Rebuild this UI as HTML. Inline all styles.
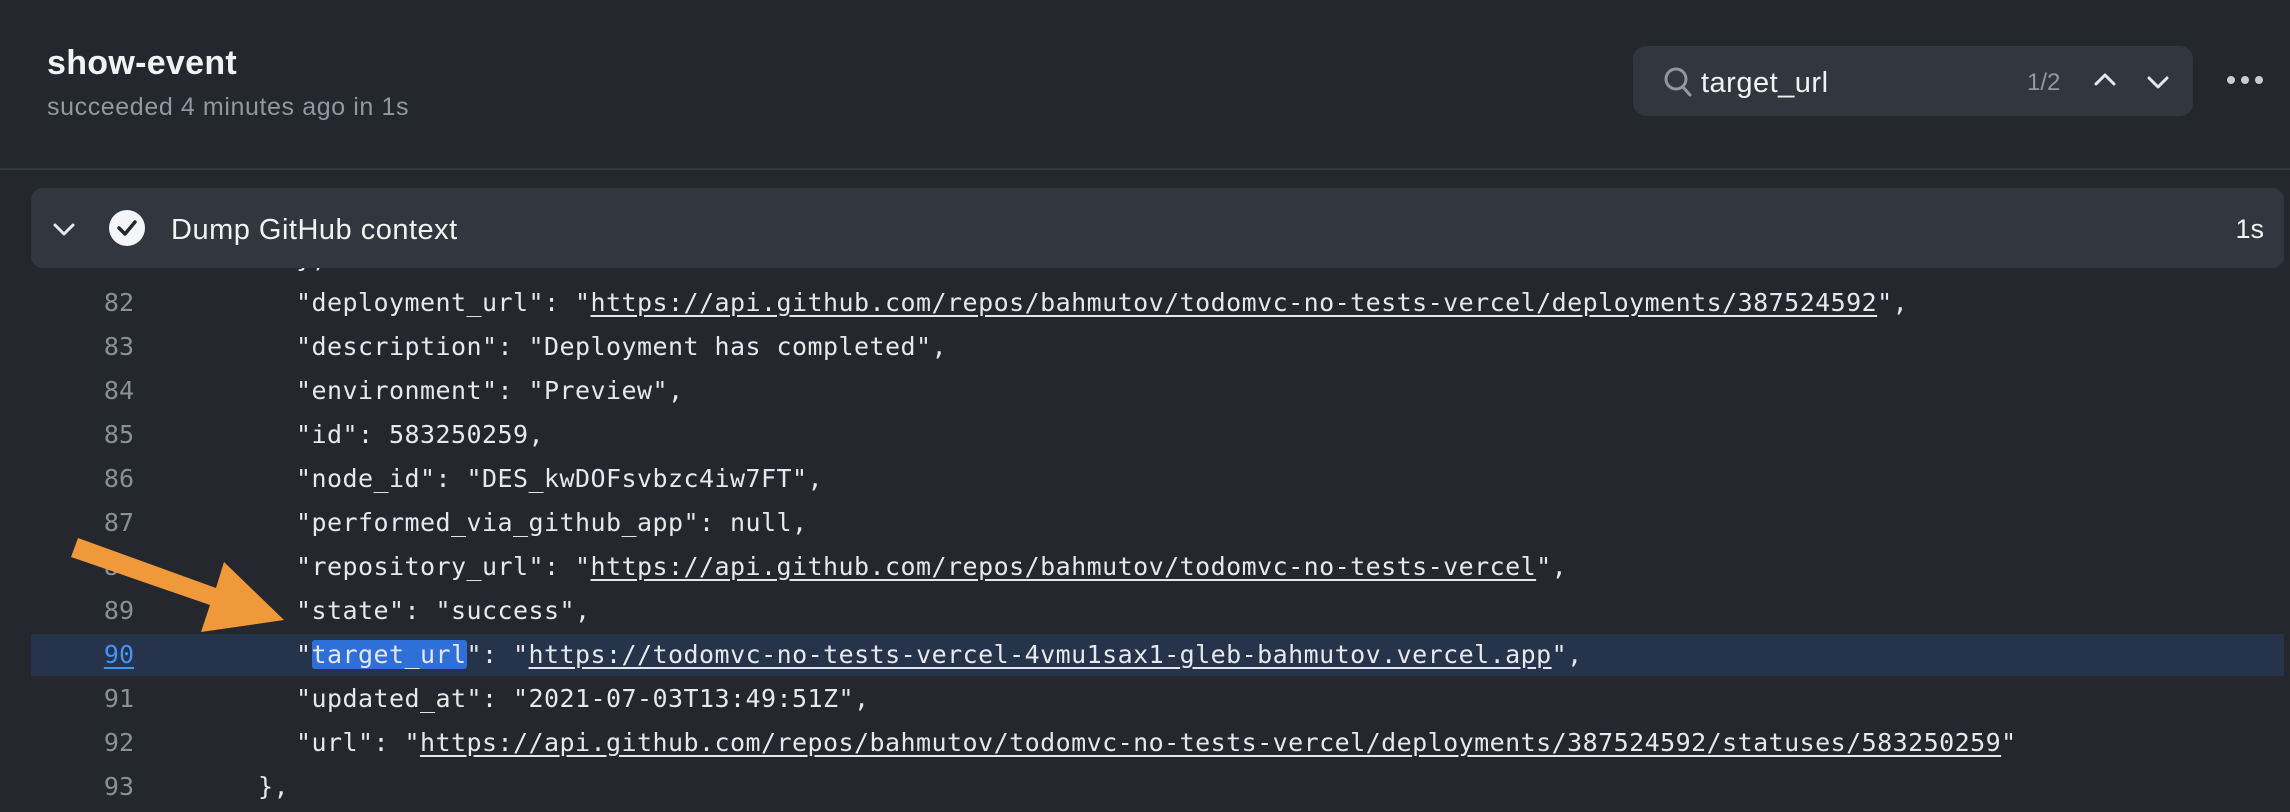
<!DOCTYPE html>
<html><head><meta charset="utf-8"><style>
html,body{margin:0;padding:0;width:2290px;height:812px;overflow:hidden;background:#24272d;font-family:"Liberation Sans",sans-serif;color:#e8eaed;position:relative}
.a{position:absolute;white-space:pre}
.title{left:47px;top:44px;font-size:34px;font-weight:bold;color:#f0f2f4;letter-spacing:0.3px}
.sub{left:47px;top:93px;font-size:25px;color:#9198a1;letter-spacing:0.6px}
.search{left:1633px;top:46px;width:560px;height:70px;background:#32363e;border-radius:13px}
.div{left:0;top:168px;width:2290px;height:2px;background:#33373e}
.step{left:31px;top:188px;width:2253px;height:80px;background:#32363e;border-radius:12px;z-index:2}
.code{font-family:"DejaVu Sans Mono","Liberation Mono",monospace;font-size:25px;color:#e6e8eb;letter-spacing:0.45px}
.ln{font-family:"DejaVu Sans Mono","Liberation Mono",monospace;font-size:25px;color:#8b9098;width:134px;text-align:right;left:0}
u{text-decoration:underline;text-underline-offset:4px}
</style></head><body>
<div class="a title">show-event</div>
<div class="a sub">succeeded 4 minutes ago in 1s</div>
<div class="a search">
 <svg class="a" style="left:30px;top:20px" width="30" height="32" viewBox="0 0 30 32"><circle cx="13" cy="13" r="10" fill="none" stroke="#9198a1" stroke-width="3"/><line x1="20" y1="21" x2="27" y2="29" stroke="#9198a1" stroke-width="3" stroke-linecap="round"/></svg>
 <div class="a" style="left:68px;top:21px;font-size:29px;color:#f0f2f4;letter-spacing:0.5px">target_url</div>
 <div class="a" style="left:394px;top:23px;font-size:24px;color:#9198a1">1/2</div>
 <svg class="a" style="left:460px;top:24px" width="24" height="18"><polyline points="3,14 12,5 21,14" fill="none" stroke="#e6e8eb" stroke-width="3" stroke-linecap="round" stroke-linejoin="round"/></svg>
 <svg class="a" style="left:513px;top:28px" width="24" height="18"><polyline points="3,4 12,13 21,4" fill="none" stroke="#e6e8eb" stroke-width="3" stroke-linecap="round" stroke-linejoin="round"/></svg>
</div>
<svg class="a" style="left:2225px;top:74px" width="42" height="12"><circle cx="6" cy="6" r="4" fill="#c9cdd2"/><circle cx="20" cy="6" r="4" fill="#c9cdd2"/><circle cx="34" cy="6" r="4" fill="#c9cdd2"/></svg>
<div class="a div"></div>
<div class="a step">
 <svg class="a" style="left:20px;top:32px" width="26" height="20"><polyline points="4,5 13,14 22,5" fill="none" stroke="#e6e8eb" stroke-width="3" stroke-linecap="round" stroke-linejoin="round"/></svg>
 <svg class="a" style="left:77px;top:21px" width="38" height="38"><circle cx="19" cy="19" r="18" fill="#f4f5f7"/><polyline points="11,19 17,25 27,13" fill="none" stroke="#24272d" stroke-width="3.5" stroke-linecap="round" stroke-linejoin="round"/></svg>
 <div class="a" style="left:140px;top:26px;font-size:29px;color:#f0f2f4;letter-spacing:0.5px">Dump GitHub context</div>
 <div class="a" style="right:20px;top:26px;font-size:27px;color:#f0f2f4">1s</div>
</div>
<div class="a" style="left:31px;top:634px;width:2253px;height:42px;background:#26344b"></div>
<div class="a code" style="left:296px;top:244px">},</div>
<div class="a ln" style="top:288px">82</div><div class="a code" style="left:296px;top:288px">"deployment_url": "<u>https://api.github.com/repos/bahmutov/todomvc-no-tests-vercel/deployments/387524592</u>",</div>
<div class="a ln" style="top:332px">83</div><div class="a code" style="left:296px;top:332px">"description": "Deployment has completed",</div>
<div class="a ln" style="top:376px">84</div><div class="a code" style="left:296px;top:376px">"environment": "Preview",</div>
<div class="a ln" style="top:420px">85</div><div class="a code" style="left:296px;top:420px">"id": 583250259,</div>
<div class="a ln" style="top:464px">86</div><div class="a code" style="left:296px;top:464px">"node_id": "DES_kwDOFsvbzc4iw7FT",</div>
<div class="a ln" style="top:508px">87</div><div class="a code" style="left:296px;top:508px">"performed_via_github_app": null,</div>
<div class="a ln" style="top:552px">88</div><div class="a code" style="left:296px;top:552px">"repository_url": "<u>https://api.github.com/repos/bahmutov/todomvc-no-tests-vercel</u>",</div>
<div class="a ln" style="top:596px">89</div><div class="a code" style="left:296px;top:596px">"state": "success",</div>
<div class="a ln" style="top:640px;color:#4493f8"><u>90</u></div><div class="a code" style="left:296px;top:640px">"<span style="background:#2f6fd8;border-radius:3px">target_url</span>": "<u>https://todomvc-no-tests-vercel-4vmu1sax1-gleb-bahmutov.vercel.app</u>",</div>
<div class="a ln" style="top:684px">91</div><div class="a code" style="left:296px;top:684px">"updated_at": "2021-07-03T13:49:51Z",</div>
<div class="a ln" style="top:728px">92</div><div class="a code" style="left:296px;top:728px">"url": "<u>https://api.github.com/repos/bahmutov/todomvc-no-tests-vercel/deployments/387524592/statuses/583250259</u>"</div>
<div class="a ln" style="top:772px">93</div><div class="a code" style="left:258px;top:772px">},</div>
<svg class="a" style="left:0;top:0;z-index:3" width="400" height="700"><polygon points="78,538 71,557 210,605 201,632 284,620 224,562 216,588" fill="#f0993a"/></svg>
</body></html>
